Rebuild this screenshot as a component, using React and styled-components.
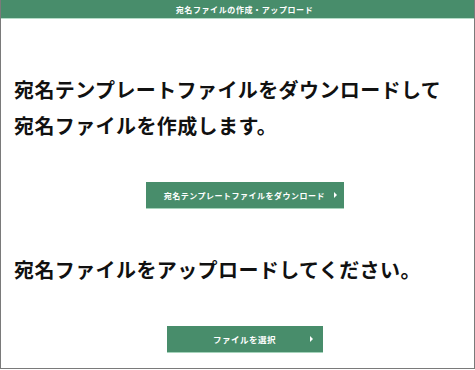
import React from "react";
import styled, { createGlobalStyle } from "styled-components";

const Global = createGlobalStyle`
  html, body { margin: 0; padding: 0; background: #fff; }
  body { font-family: "Noto Sans CJK JP", "Noto Sans", sans-serif; }
`;

const green = "#488d6b";

const Frame = styled.div`
  box-sizing: border-box;
  width: 475px;
  height: 369px;
  border: 1px solid #7a7a7a;
  border-top: none;
  display: flex;
  flex-direction: column;
`;

const Header = styled.header`
  height: 18px;
  padding-left: 14px;
  background: ${green};
  border-bottom: 1px solid #b5dcc8;
  color: #fff;
  font-size: 8px;
  font-weight: 700;
  letter-spacing: 0.6px;
  display: flex;
  align-items: center;
  justify-content: center;
`;

const Content = styled.main`
  padding-left: 14px;
  display: flex;
  flex-direction: column;
`;

const Heading = styled.h2`
  margin: ${(p) => p.$mt}px 0 0 -1px;
  font-size: 20px;
  line-height: 36px;
  font-weight: 700;
  letter-spacing: 0.4px;
  color: #111;
`;

const Button = styled.button`
  position: relative;
  align-self: center;
  margin-top: ${(p) => p.$mt}px;
  width: ${(p) => p.$w}px;
  height: 27px;
  box-sizing: border-box;
  padding: 0;
  border: none;
  border-bottom: 1px solid #a5d3bb;
  background: ${green};
  color: #fff;
  font-family: inherit;
  font-size: ${(p) => p.$fs}px;
  font-weight: 700;
  letter-spacing: 0.5px;
  display: flex;
  align-items: center;
  justify-content: center;
  cursor: pointer;
`;

const Arrow = styled.span`
  position: absolute;
  right: ${(p) => p.$r}px;
  top: 50%;
  margin-top: -3px;
  width: 0;
  height: 0;
  border-top: 3px solid transparent;
  border-bottom: 3px solid transparent;
  border-left: 3px solid #fff;
`;

export default function App() {
  return (
    <>
      <Global />
      <Frame>
        <Header>宛名ファイルの作成・アップロード</Header>
        <Content>
          <Heading $mt={53}>
            宛名テンプレートファイルをダウンロードして
            <br />
            宛名ファイルを作成します。
          </Heading>
          <Button $mt={38} $w={198} $fs={8}>
            宛名テンプレートファイルをダウンロード
            <Arrow $r={7} />
          </Button>
          <Heading $mt={43}>宛名ファイルをアップロードしてください。</Heading>
          <Button $mt={38} $w={156} $fs={8.5}>
            ファイルを選択
            <Arrow $r={10} />
          </Button>
        </Content>
      </Frame>
    </>
  );
}
